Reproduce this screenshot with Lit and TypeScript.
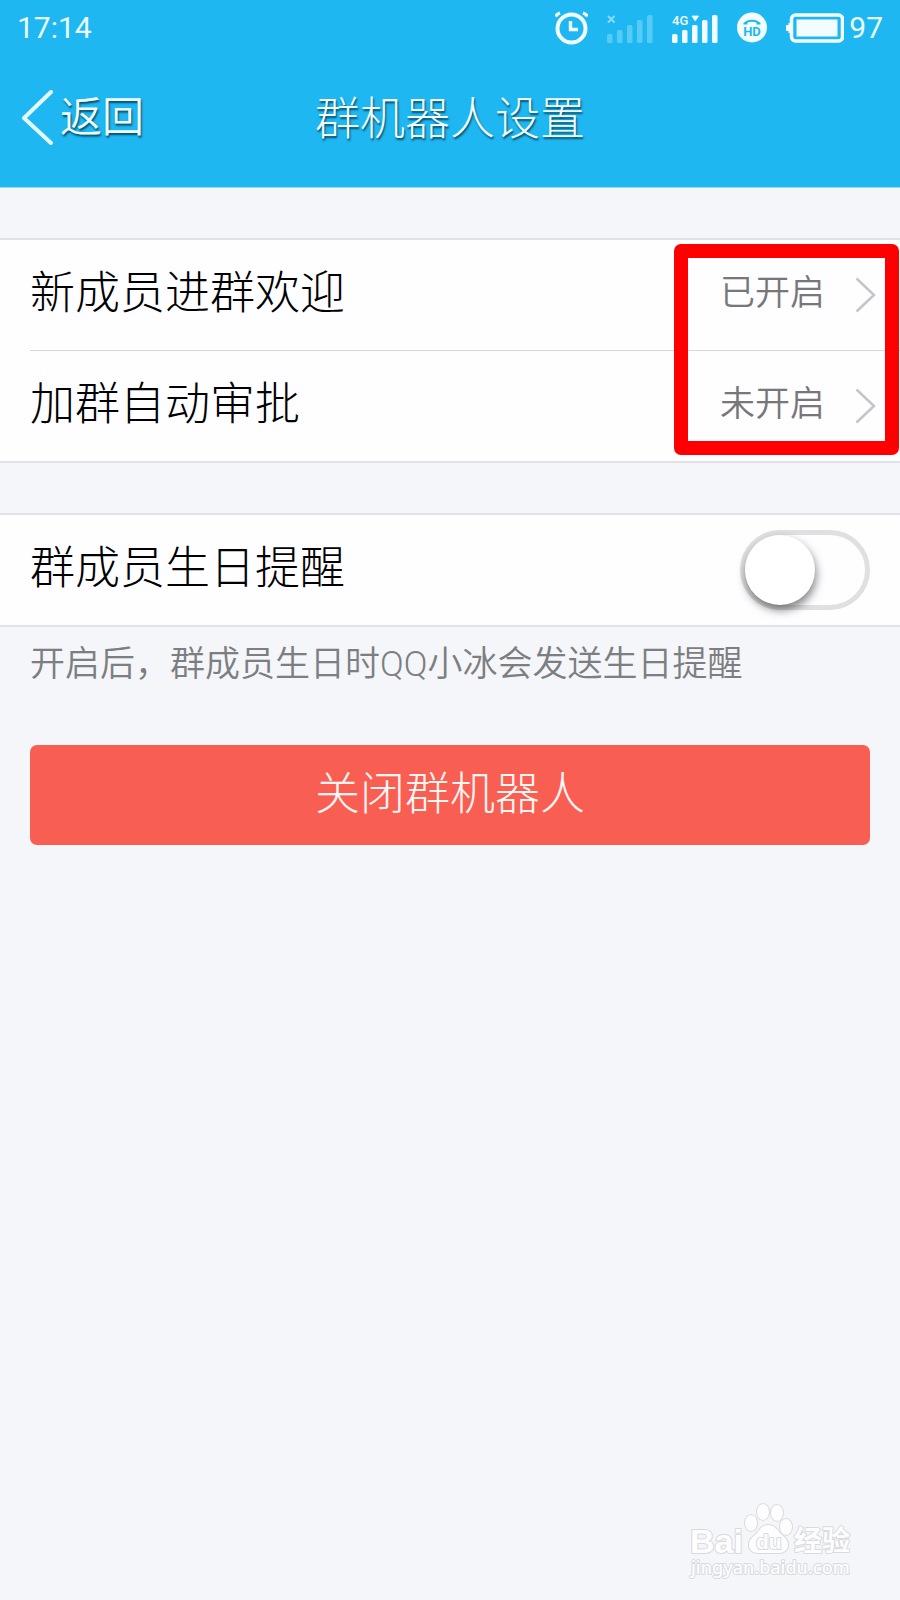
import { LitElement, html, css, svg } from "lit";
import { customElement, property, state } from "lit/decorators.js";

const FONT = css`Roboto, "Noto Sans CJK SC", sans-serif`;
const SMALL_FONT = css`Roboto, "Noto Sans CJK SC DemiLight", "Noto Sans CJK SC", sans-serif`;

@customElement("status-bar")
class StatusBar extends LitElement {
  static styles = css`
    :host {
      display: flex;
      align-items: center;
      justify-content: space-between;
      height: 56px;
      padding: 0 17px;
      color: #eafcff;
      font: 400 30px/56px ${FONT};
    }
    .icons {
      display: flex;
      align-items: center;
    }
    .alarm,
    .sim,
    .hd { margin-right: 19px; }
    .battery { margin-right: 5px; }
    svg { display: block; }
  `;

  private bars(fill: string) {
    return [9, 13, 18, 23, 28].map(
      (h, i) => svg`<rect x=${i * 10} y=${31 - h} width="5.500" height=${h} rx="1.5" fill=${fill} />`
    );
  }

  render() {
    return html`
      <span>17:14</span>
      <div class="icons">
        <svg class="alarm" width="33" height="34" viewBox="0 0 33 34" fill="none" stroke="#f2fdff" role="img" aria-label="闹钟">
          <circle cx="16.500" cy="17.500" r="14" stroke-width="4" />
          <path d="M15.500 10v8.500h7.500" stroke-width="3.400" />
          <path d="M0.500 5.500q1.500-2.500 4.500-3.500M32.500 5.500q-1.500-2.500-4.500-3.500" stroke-width="3.400" />
        </svg>
        <svg class="sim" width="46" height="32" viewBox="0 0 46 32" role="img" aria-label="无信号">
          ${this.bars("#55cbf6")}
          <path d="M1 4l6.500 6.500M7.500 4l-6.500 6.500" stroke="#8bdcf9" stroke-width="2" />
        </svg>
        <svg class="sim" width="46" height="32" viewBox="0 0 46 32" role="img" aria-label="4G 信号">
          ${this.bars("#f2fdff")}
          <rect x="0" y="0" width="17" height="13" fill="#1eb7f1" />
          <path d="M20 4h6.500l-3.250 5z" fill="#f2fdff" stroke="#f2fdff" stroke-width="0.800" />
          <text x="0" y="13" font-size="13" font-weight="500" fill="#f2fdff">4G</text>
        </svg>
        <svg class="hd" width="30" height="32" viewBox="0 0 30 32" role="img" aria-label="HD 通话">
          <circle cx="15" cy="15.500" r="15" fill="#f2fdff" />
          <path d="M6.500 12.500v-1.500c4-4.500 13-4.500 17 0v1.500h-4v-2q-4.500-1.500-9 0v2z" fill="#1eb7f1" />
          <text x="15" y="24" font-size="13" font-weight="700" text-anchor="middle" fill="#1eb7f1">HD</text>
        </svg>
        <svg class="battery" width="58" height="30" viewBox="0 0 58 30" role="img" aria-label="电量">
          <rect x="5.500" y="2" width="51" height="26" rx="4" fill="none" stroke="#f2fdff" stroke-width="3.500" />
          <rect x="10.500" y="6.500" width="41" height="17" fill="#f2fdff" />
          <path d="M5 10H2.500v2H0v6h2.500v2H5z" fill="#f2fdff" />
        </svg>
        <span>97</span>
      </div>
    `;
  }
}

@customElement("nav-bar")
class NavBar extends LitElement {
  @property() heading = "";

  static styles = css`
    :host {
      display: grid;
      grid-template-columns: 1fr auto 1fr;
      align-items: center;
      height: 124px;
      padding: 0 20px;
      color: #effdff;
      font-family: ${FONT};
      text-shadow: 1px 2px 2px rgba(0, 40, 60, 0.75);
    }
    .back {
      display: flex;
      align-items: center;
      gap: 6px;
      justify-self: start;
      padding: 0;
      border: 0;
      background: none;
      color: inherit;
      font: 350 42px/60px ${SMALL_FONT};
      text-shadow: inherit;
    }
    h1 {
      margin: 0;
      padding-top: 4px;
      font-size: 45px;
      font-weight: 300;
      line-height: 60px;
    }
  `;

  render() {
    return html`
      <button class="back" type="button">
        <svg width="34" height="56" viewBox="0 0 34 56" fill="none" stroke="#e2faff" stroke-width="4" stroke-linecap="round" stroke-linejoin="round" aria-hidden="true">
          <path d="M31 2 4 28 31 53" />
        </svg>
        <span>返回</span>
      </button>
      <h1>${this.heading}</h1>
    `;
  }
}

@customElement("baidu-mark")
class BaiduMark extends LitElement {
  static styles = css`
    :host {
      display: block;
    }
    svg { display: block; }
    .ink {
      fill: #fdfdfe;
      stroke: #d9dade;
      stroke-width: 2px;
      stroke-linejoin: round;
      paint-order: stroke;
    }
    .latin { font: 700 34px "Liberation Sans", sans-serif; }
    .du { font: 700 21px "Liberation Sans", sans-serif; }
    .han { font: 700 28px "Noto Sans CJK SC", sans-serif; }
    .url { font: 500 18px "Noto Sans", sans-serif; }
  `;

  render() {
    return html`
      <svg width="175" height="86" viewBox="0 0 175 86" role="img" aria-label="百度经验">
        <text class="ink latin" x="5" y="53">Bai</text>
        <g class="ink">
          <ellipse cx="66" cy="23" rx="6" ry="8" />
          <ellipse cx="78" cy="12" rx="6" ry="8" />
          <ellipse cx="92" cy="13" rx="6" ry="8" />
          <ellipse cx="101" cy="27" rx="6" ry="8" />
          <path d="M83 25c-6 0-8 4-11 8-4 4-8 6-8 12 0 5 4 8 9 8h21c5 0 9-3 9-8 0-6-4-8-8-12-3-4-6-8-12-8z" />
        </g>
        <text class="ink du" x="71" y="49">du</text>
        <text class="ink han" x="109" y="51">经验</text>
        <text class="ink url" x="6" y="74">jingyan.baidu.com</text>
      </svg>
    `;
  }
}

@customElement("app-root")
class AppRoot extends LitElement {
  @state() private birthday = false;

  private rows = [
    { label: "新成员进群欢迎", value: "已开启" },
    { label: "加群自动审批", value: "未开启" },
  ];

  static styles = css`
    :host {
      display: flex;
      flex-direction: column;
      min-height: 100vh;
      background: #f4f6fa;
      color: #000;
      font-family: ${FONT};
      font-weight: 300;
    }
    * { box-sizing: border-box; }
    header {
      height: 188px;
      background: #1eb7f1;
      border-bottom: 1px solid #8edaf6;
    }
    main {
      display: flex;
      flex-direction: column;
      padding-top: 50px;
    }
    .card {
      position: relative;
      background: #fefdff;
      border: solid #e0e2e5;
      border-width: 2px 0;
    }
    .card + .card { margin-top: 50px; }
    .row {
      display: flex;
      align-items: center;
      justify-content: space-between;
      width: 100%;
      height: 110px;
      padding: 0 30px;
      border: 0;
      background: none;
      color: inherit;
      font: inherit;
      text-align: left;
    }
    .divider {
      height: 1px;
      margin: 0 0 0 30px;
      border: 0;
      background: #d6d7da;
    }
    .label {
      padding-bottom: 2px;
      font-size: 45px;
      line-height: 60px;
    }
    .state {
      display: flex;
      align-items: center;
      gap: 30px;
      margin-right: -6px;
      color: #77777a;
      font: 350 35px/50px ${SMALL_FONT};
    }
    .value { padding-bottom: 2px; }
    .highlight {
      position: absolute;
      inset: 4px 1px 6px auto;
      width: 225px;
      border: 14px solid #fe0000;
      border-radius: 7px;
      pointer-events: none;
    }
    .switch {
      appearance: none;
      width: 130px;
      height: 80px;
      margin: 0;
      border: 5px solid #e0e0e2;
      border-radius: 40px;
      background: #fefdff;
    }
    .switch::before {
      content: "";
      display: block;
      width: 70px;
      height: 70px;
      border-radius: 50%;
      background: #fff;
      box-shadow: 1px 5px 10px rgba(0, 0, 0, 0.5);
    }
    .switch:checked { background: #1eb7f1; }
    .switch:checked::before { margin-left: 50px; }
    .hint {
      margin: 13px 30px 0;
      color: #7d7e81;
      font: 350 35px/50px ${SMALL_FONT};
    }
    .danger {
      height: 100px;
      margin: 55px 30px 0;
      padding: 0;
      border: 0;
      border-radius: 7px;
      background: #f95e53;
      color: #fff6f4;
      font: 300 45px/60px ${FONT};
    }
    footer {
      display: flex;
      justify-content: flex-end;
      margin-top: auto;
      padding: 0 40px 14px;
    }
  `;

  render() {
    return html`
      <header>
        <status-bar></status-bar>
        <nav-bar heading="群机器人设置"></nav-bar>
      </header>
      <main>
        <section class="card">
          ${this.rows.map(
            (row, i) => html`
              ${i ? html`<hr class="divider" />` : ""}
              <button class="row" type="button">
                <span class="label">${row.label}</span>
                <span class="state">
                  <span class="value">${row.value}</span>
                  <svg width="21" height="36" viewBox="0 0 21 36" fill="none" stroke="#c2c6c9" stroke-width="2.500" aria-hidden="true">
                    <path d="M1.500 1.500 19 18 1.500 34.500" />
                  </svg>
                </span>
              </button>
            `
          )}
          <div class="highlight"></div>
        </section>
        <section class="card">
          <div class="row">
            <label class="label" for="birthday">群成员生日提醒</label>
            <input
              class="switch"
              id="birthday"
              type="checkbox"
              role="switch"
              .checked=${this.birthday}
              @change=${(e: Event) => (this.birthday = (e.target as HTMLInputElement).checked)}
            />
          </div>
        </section>
        <p class="hint">开启后，群成员生日时QQ小冰会发送生日提醒</p>
        <button class="danger" type="button">关闭群机器人</button>
      </main>
      <footer><baidu-mark></baidu-mark></footer>
    `;
  }
}
